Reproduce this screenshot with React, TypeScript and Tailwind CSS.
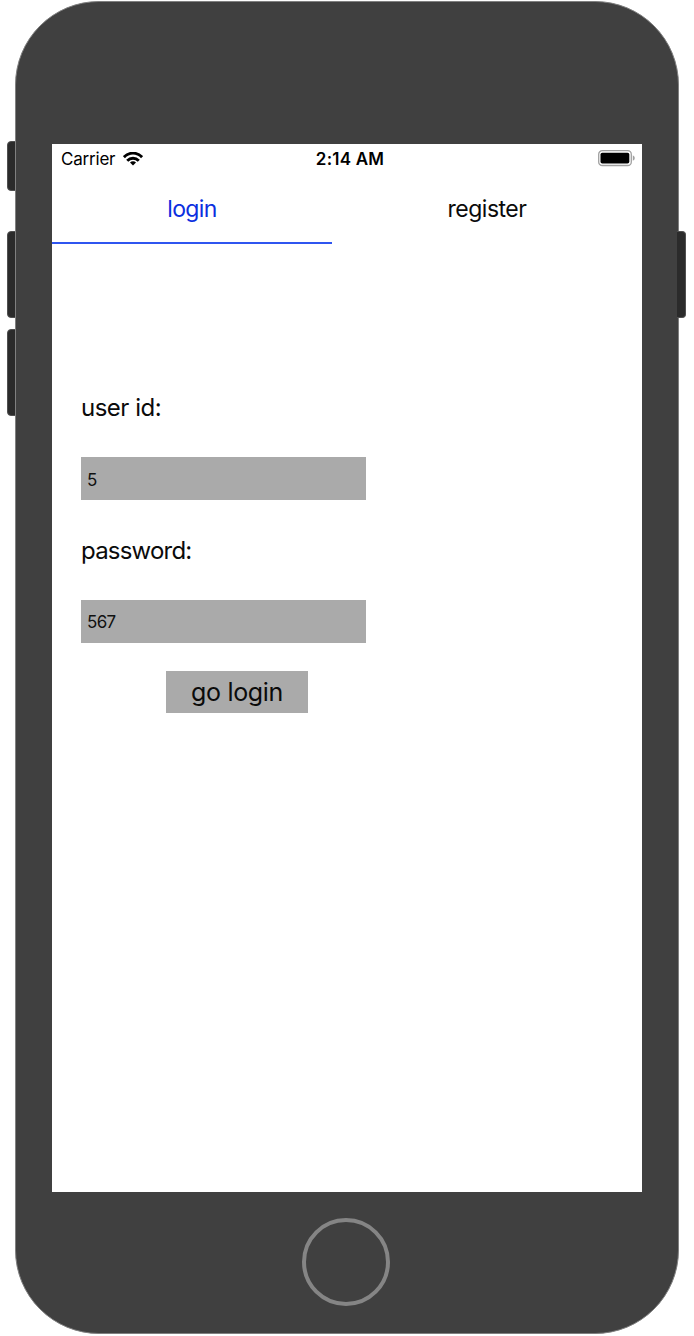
import React, { useState } from 'react';

function SideButton({ className }: { className: string }) {
  return <div className={`shrink-0 border border-[#505050] bg-[#2b2b2b] ${className}`} />;
}

function WifiIcon() {
  return (
    <svg className="h-[14px] w-[20px]" viewBox="0 0 20 14" fill="none" stroke="#000" strokeWidth="2.9">
      <path d="M0.9 5.2 C6 -0.2 14 -0.2 19.1 5.2" />
      <path d="M4.2 8.7 C7.5 5.4 12.5 5.4 15.8 8.7" />
      <path d="M10 9.3 C8.8 9.3 7.8 9.7 7 10.4 L10 13.6 L13 10.4 C12.2 9.7 11.2 9.3 10 9.3 Z" fill="#000" stroke="none" />
    </svg>
  );
}

function BatteryIcon() {
  return (
    <svg className="h-[17px] w-[38px]" viewBox="0 0 38 17">
      <rect x="0.7" y="0.7" width="32.6" height="14.8" rx="3.6" fill="#fff" stroke="#a0a0a0" strokeWidth="1.3" />
      <rect x="2.5" y="2.8" width="28.8" height="10.8" rx="1.8" fill="#000" />
      <path d="M34.8 5.3 Q36.8 6.2 36.8 8 Q36.8 9.9 34.8 10.8 Z" fill="#a0a0a0" />
    </svg>
  );
}

function StatusBar() {
  return (
    <div className="grid h-[29px] grid-cols-3 items-center pl-[9px] pr-[6px] text-[17px] leading-[20px] text-black">
      <div className="flex items-center gap-[8px]">
        <span className="tracking-[-0.2px]">Carrier</span>
        <WifiIcon />
      </div>
      <div className="pl-[3px] text-center font-semibold tracking-[0.2px]">2:14 AM</div>
      <div className="flex justify-end">
        <BatteryIcon />
      </div>
    </div>
  );
}

export default function App() {
  const [userId, setUserId] = useState('5');
  const [password, setPassword] = useState('567');
  const fieldClass =
    'block h-[43px] w-[285px] rounded-none bg-[#aaaaaa] px-[6px] pt-[2px] text-[17px] tracking-[-0.7px] text-[#111] outline-none';

  return (
    <div className="flex h-[1336px] w-[694px] bg-white pl-[6px] font-['Inter',sans-serif] text-[#0b0b0b]">
      <div className="flex w-[10px] flex-col pl-[0.6px] pt-[141px]">
        <SideButton className="h-[50px] rounded-l-[4px]" />
        <SideButton className="mt-[40px] h-[87px] rounded-l-[4px]" />
        <SideButton className="mt-[11px] h-[87px] rounded-l-[4px]" />
      </div>
      <div className="mt-[1px] -ml-[1px] flex h-[1333px] w-[664px] shrink-0 flex-col rounded-[84px] border border-[#808080] bg-[#404040] px-[36px] pt-[142px]">
        <main className="flex h-[1048px] w-[590px] shrink-0 flex-col bg-white">
          <StatusBar />
          <nav className="flex h-[71px] text-[23px] leading-[28px]">
            <button className="w-[280px] border-b-2 border-[#2f55f0] pt-[2px] tracking-[-0.6px] text-[#0c2fe0]">login</button>
            <button className="w-[310px] tracking-[-0.5px]">register</button>
          </nav>
          <form className="flex flex-col items-start pl-[29px] pt-[149px] text-[24px] leading-[30px]">
            <label htmlFor="user" className="tracking-[-0.5px]">user id:</label>
            <input id="user" className={`mt-[34px] ${fieldClass}`} value={userId} onChange={(e) => setUserId(e.target.value)} />
            <label htmlFor="password" className="mt-[36px] tracking-[-0.8px]">password:</label>
            <input id="password" className={`mt-[33.5px] ${fieldClass}`} value={password} onChange={(e) => setPassword(e.target.value)} />
            <button type="button" className="ml-[85px] mt-[28px] h-[42.5px] w-[142px] bg-[#aaaaaa] text-[25px] tracking-[-0.3px]">go login</button>
          </form>
        </main>
        <div className="mt-[26px] flex justify-center pr-[2px]">
          <div className="h-[88px] w-[88px] rounded-full border-[4px] border-[#858585]" />
        </div>
      </div>
      <div className="-ml-[2px] pt-[231px]">
        <SideButton className="h-[87px] w-[9px] rounded-r-[4px] border-l-0" />
      </div>
    </div>
  );
}
